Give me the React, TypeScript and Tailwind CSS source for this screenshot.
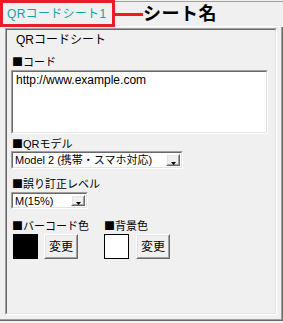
import type { ReactNode } from 'react';

const FONT = '"Liberation Sans", "Noto Sans CJK JP", sans-serif';

function Sunken({ className, children }: { className?: string; children?: ReactNode }) {
  return (
    <div className={`border border-t-[#a0a0a0] border-l-[#a0a0a0] border-r-white border-b-white ${className ?? ''}`}>
      <div className="h-full w-full border border-t-[#696969] border-l-[#696969] border-r-[#e3e3e3] border-b-[#e3e3e3]">
        {children}
      </div>
    </div>
  );
}

function Raised({ className, children }: { className?: string; children?: ReactNode }) {
  return (
    <div className={`border border-t-white border-l-white border-r-[#696969] border-b-[#696969] ${className ?? ''}`}>
      <div className="flex h-full w-full items-center justify-center border border-t-[#e3e3e3] border-l-[#e3e3e3] border-r-[#a0a0a0] border-b-[#a0a0a0] bg-[#f0f0f0]">
        {children}
      </div>
    </div>
  );
}

function Select({ value, className }: { value: string; className: string }) {
  return (
    <Sunken className={className}>
      <div className="flex h-full bg-white">
        <div className="flex-1 overflow-hidden whitespace-nowrap pl-[2px] text-[11px] leading-[14px] text-black">
          {value}
        </div>
        <Raised className="my-[1px] mr-[1px] h-[calc(100%-2px)] w-[14px]">
          <svg width="5" height="6" viewBox="0 0 5 6" className="mt-[3px]">
            <path d="M0 3h5l-2.5 3z" fill="#000" />
          </svg>
        </Raised>
      </div>
    </Sunken>
  );
}

function Label({ text, className }: { text: string; className?: string }) {
  return (
    <div className={`h-[14px] text-[11px] leading-[14px] text-black whitespace-nowrap ${className ?? ''}`}>
      <span style={{ fontFamily: '"Noto Sans CJK JP", sans-serif' }}>■</span>
      {text}
    </div>
  );
}

function ChangeButton() {
  return (
    <Raised className="h-[25px] w-[34px]">
      <span className="text-[12px] leading-[14px] text-black">変更</span>
    </Raised>
  );
}

export default function App() {
  return (
    <div className="flex h-[323px] w-[283px] flex-col overflow-hidden bg-[#f0f0f0]" style={{ fontFamily: FONT }}>
      {/* tab strip */}
      <div className="flex h-[27px] shrink-0">
        <div className="flex h-[27px] w-[115px] items-center border-[3px] border-[#ec1c24] pl-[4px]">
          <span className="text-[12px] leading-[14px] tracking-[0.3px] text-[#12a59a] whitespace-nowrap">QRコードシート1</span>
        </div>
        <div className="mt-[1px] flex h-[26px] flex-1 flex-col border-t border-b border-t-[#a0a0a0] border-b-white">
          <div className="flex h-full items-center">
            <div className="h-[3px] w-[28px] bg-[#ec1c24]" />
            <span className="text-[18px] font-bold leading-[20px] tracking-[0.5px] text-black">シート名</span>
          </div>
        </div>
      </div>

      {/* tab page */}
      <div className="h-[294px] border-r border-b border-r-[#696969] border-b-[#696969]">
        <div className="flex h-full flex-col border-r border-b border-r-[#a0a0a0] border-b-[#a0a0a0] pb-[4px] pl-[5px] pr-[4px] pt-[1px]">
          <Sunken className="flex-1">
            <div className="flex flex-col">
              <div className="mt-[3px] h-[14px] pl-[9px] text-[12px] leading-[14px] text-black">QRコードシート</div>
              <Label className="mt-[7px] pl-[5px]" text="コード" />
              <Sunken className="ml-[4px] mt-[2px] h-[64px] w-[257px]">
                <div className="h-full bg-white pl-[3px] pt-[1px] text-[12px] leading-[14px] text-black">
                  http://www.example.com
                </div>
              </Sunken>
              <Label className="mt-[2px] pl-[5px]" text="QRモデル" />
              <Select className="ml-[4px] mt-[1px] h-[18px] w-[172px]" value="Model 2 (携帯・スマホ対応)" />
              <Label className="mt-[7px] pl-[5px]" text="誤り訂正レベル" />
              <Select className="ml-[4px] mt-[2px] h-[17px] w-[77px]" value="M(15%)" />
              <div className="mt-[9px] flex pl-[5px]">
                <div className="w-[92px]">
                  <Label text="バーコード色" />
                  <div className="ml-[1px] mt-[2px] flex items-start gap-[6px]">
                    <div className="h-[25px] w-[25px] bg-black" />
                    <ChangeButton />
                  </div>
                </div>
                <div>
                  <Label text="背景色" />
                  <div className="mt-[2px] flex items-start gap-[7px]">
                    <div className="h-[25px] w-[25px] border border-black bg-white" />
                    <ChangeButton />
                  </div>
                </div>
              </div>
            </div>
          </Sunken>
        </div>
      </div>
    </div>
  );
}
